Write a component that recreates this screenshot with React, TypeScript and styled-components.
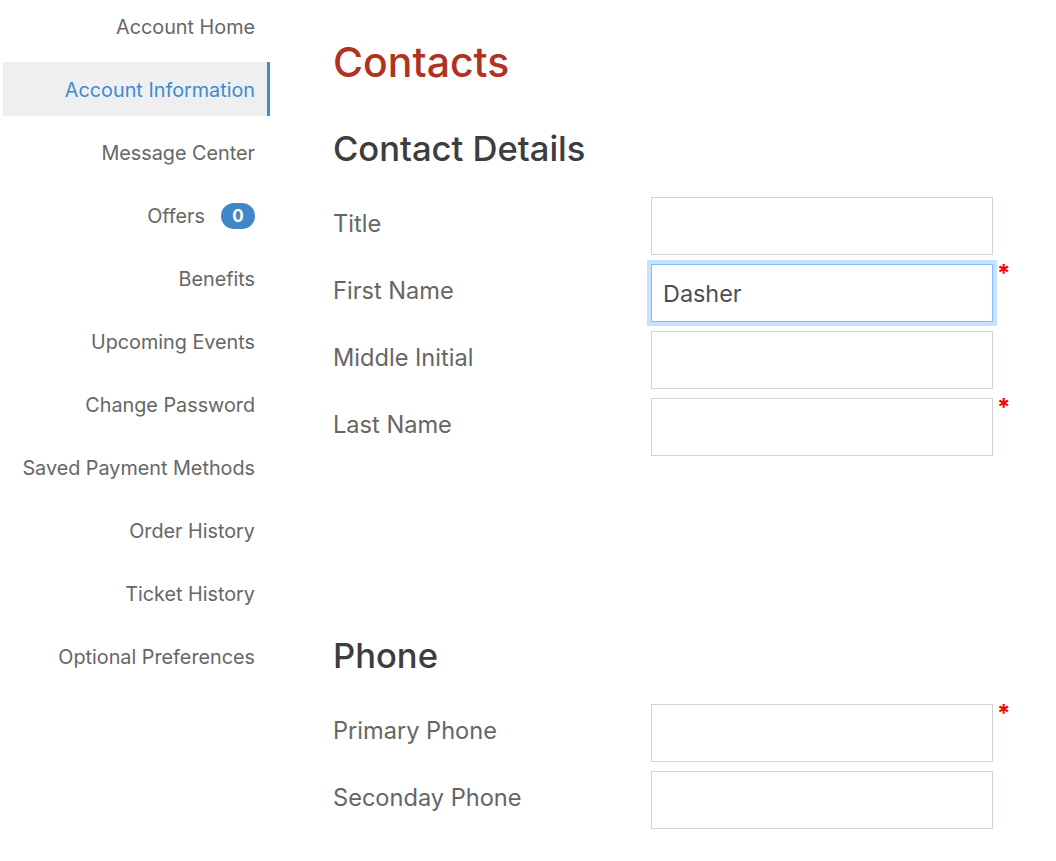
import React from "react";
import styled, { createGlobalStyle } from "styled-components";

const Global = createGlobalStyle`
  html, body { margin: 0; padding: 0; background: #fff; }
  body { font-family: Inter, "Noto Sans", Arial, sans-serif; -webkit-font-smoothing: antialiased; }
  * { box-sizing: border-box; }
`;

const Page = styled.div`
  display: flex;
  align-items: flex-start;
  width: 1056px;
  min-height: 861px;
`;

const Sidebar = styled.nav`
  display: flex;
  flex-direction: column;
  gap: 9px;
  margin-left: 3px;
  margin-top: -1px;
  width: 267px;
`;

const NavItem = styled.a<{ $active?: boolean }>`
  display: flex;
  align-items: center;
  justify-content: flex-end;
  gap: 16px;
  height: 54px;
  padding-right: 12px;
  padding-top: 1px;
  font-size: 19.8px;
  color: ${(p) => (p.$active ? "#3d8bd3" : "#666666")};
  background: ${(p) => (p.$active ? "#efefef" : "transparent")};
  border-right: 3px solid ${(p) => (p.$active ? "#3d8bd3" : "transparent")};
  text-decoration: none;
`;

const Badge = styled.span`
  display: inline-flex;
  align-items: center;
  justify-content: center;
  min-width: 34px;
  height: 26px;
  border-radius: 13px;
  background: #3f87c7;
  color: #fff;
  font-weight: 700;
  font-size: 17px;
`;

const Main = styled.main`
  margin-left: 63px;
  padding-top: 37px;
  display: flex;
  flex-direction: column;
`;

const PageTitle = styled.h1`
  margin: 0;
  font-size: 41px;
  line-height: 50px;
  font-weight: 500;
  color: #b23222;
`;

const SectionTitle = styled.h2<{ $spaceTop: number }>`
  margin: ${(p) => p.$spaceTop}px 0 29px;
  font-size: 34.6px;
  line-height: 40px;
  font-weight: 500;
  color: #3d3d3d;
`;

const Fields = styled.div`
  display: flex;
  flex-direction: column;
  gap: 9px;
`;

const Row = styled.div`
  display: grid;
  grid-template-columns: 318px 342px auto;
  align-items: start;
`;

const Label = styled.label`
  font-size: 23.6px;
  line-height: 28px;
  padding-top: 13px;
  color: #666666;
`;

const Input = styled.input<{ $focused?: boolean }>`
  width: 342px;
  height: 58px;
  border: 1px solid ${(p) => (p.$focused ? "#80bdff" : "#ced4da")};
  box-shadow: ${(p) => (p.$focused ? "0 0 0 4px rgba(0,123,255,0.22)" : "none")};
  padding: 0 11px;
  font-family: inherit;
  font-size: 23.4px;
  color: #495057;
  background: #fff;
  outline: none;
  border-radius: 0;
`;

const Required = styled.span`
  margin-left: 4px;
  margin-top: -2px;
  font-size: 24px;
  line-height: 24px;
  font-weight: 700;
  color: #ff0000;
`;

const navItems = [
  "Account Home",
  "Account Information",
  "Message Center",
  "Offers",
  "Benefits",
  "Upcoming Events",
  "Change Password",
  "Saved Payment Methods",
  "Order History",
  "Ticket History",
  "Optional Preferences",
];

type Field = { label: string; value?: string; required?: boolean; focused?: boolean };

const contactFields: Field[] = [
  { label: "Title" },
  { label: "First Name", value: "Dasher", required: true, focused: true },
  { label: "Middle Initial" },
  { label: "Last Name", required: true },
];

const phoneFields: Field[] = [
  { label: "Primary Phone", required: true },
  { label: "Seconday Phone" },
];

function FieldList({ fields }: { fields: Field[] }) {
  return (
    <Fields>
      {fields.map((f) => (
        <Row key={f.label}>
          <Label>{f.label}</Label>
          <Input $focused={f.focused} defaultValue={f.value ?? ""} />
          {f.required ? <Required>*</Required> : <span />}
        </Row>
      ))}
    </Fields>
  );
}

export default function App() {
  return (
    <Page>
      <Global />
      <Sidebar>
        {navItems.map((item) => (
          <NavItem key={item} $active={item === "Account Information"}>
            {item}
            {item === "Offers" && <Badge>0</Badge>}
          </NavItem>
        ))}
      </Sidebar>
      <Main>
        <PageTitle>Contacts</PageTitle>
        <SectionTitle $spaceTop={41}>Contact Details</SectionTitle>
        <FieldList fields={contactFields} />
        <SectionTitle $spaceTop={179}>Phone</SectionTitle>
        <FieldList fields={phoneFields} />
      </Main>
    </Page>
  );
}
